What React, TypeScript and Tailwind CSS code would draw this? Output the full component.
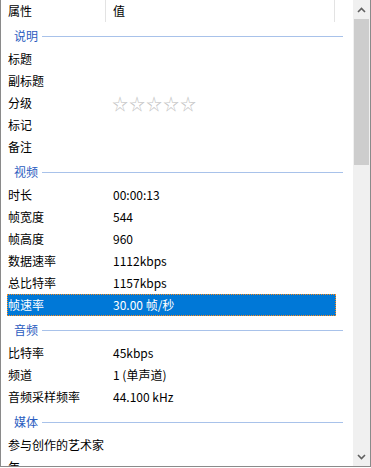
import React from "react";

type Item = { group: string } | { label: string; value?: string; stars?: boolean; selected?: boolean };

const ITEMS: Item[] = [
  { group: "说明" },
  { label: "标题" },
  { label: "副标题" },
  { label: "分级", stars: true },
  { label: "标记" },
  { label: "备注" },
  { group: "视频" },
  { label: "时长", value: "00:00:13" },
  { label: "帧宽度", value: "544" },
  { label: "帧高度", value: "960" },
  { label: "数据速率", value: "1112kbps" },
  { label: "总比特率", value: "1157kbps" },
  { label: "帧速率", value: "30.00 帧/秒", selected: true },
  { group: "音频" },
  { label: "比特率", value: "45kbps" },
  { label: "频道", value: "1 (单声道)" },
  { label: "音频采样频率", value: "44.100 kHz" },
  { group: "媒体" },
  { label: "参与创作的艺术家" },
  { label: "年" },
];

const FONT = { fontFamily: '"Segoe UI", "Noto Sans CJK SC", "Noto Sans", sans-serif' };

function Row({ item }: { item: Item }) {
  if ("group" in item) {
    return (
      <div className="flex h-[26px] items-center pt-[2px] pl-[13px] pr-[10px]">
        <span className="text-[12px] text-[#2a5cc0]">{item.group}</span>
        <div className="ml-[4px] h-px flex-1 bg-[#a8c2ea]" />
      </div>
    );
  }
  return (
    <div
      className={
        item.selected
          ? "ml-[6px] flex h-[22px] w-[329px] items-center border border-dotted border-[#ff8c1a] bg-[#0078d7] text-white"
          : "ml-[6px] flex h-[22px] w-[329px] items-center border border-transparent text-black"
      }
    >
      <span className="w-[105px] shrink-0 text-[12px]">{item.label}</span>
      {item.stars ? (
        <span className="-ml-[1px] flex gap-[1px] text-[16px] leading-none text-[#c4c4c4]">
          <span>☆</span>
          <span>☆</span>
          <span>☆</span>
          <span>☆</span>
          <span>☆</span>
        </span>
      ) : (
        <span className="text-[12px]">{item.value}</span>
      )}
    </div>
  );
}

export default function App() {
  return (
    <div className="h-[468px] w-[371px] bg-white" style={FONT}>
      <div className="flex h-[467px] w-[371px] overflow-hidden border-x border-b border-[#8a8a8a]">
        <div className="flex-1 overflow-hidden">
          <div className="flex h-[22px] items-center text-[12px] text-black">
            <span className="w-[104px] pl-[7px]">属性</span>
            <div className="h-[22px] w-px bg-[#e3e3e3]" />
            <span className="w-[228px] pl-[7px]">值</span>
            <div className="h-[22px] w-px bg-[#e3e3e3]" />
          </div>
          {ITEMS.map((item, i) => (
            <Row key={i} item={item} />
          ))}
        </div>
        <div className="flex w-[17px] shrink-0 flex-col bg-[#f0f0f0]">
          <div className="flex h-[19px] items-center justify-center">
            <svg width="9" height="6" viewBox="0 0 9 6">
              <path d="M1 5 L4.5 1.5 L8 5" stroke="#606060" strokeWidth="1.6" fill="none" />
            </svg>
          </div>
          <div className="mx-px h-[146px] bg-[#cdcdcd]" />
          <div className="flex-1" />
          <div className="flex h-[19px] items-center justify-center">
            <svg width="9" height="6" viewBox="0 0 9 6">
              <path d="M1 1 L4.5 4.5 L8 1" stroke="#606060" strokeWidth="1.6" fill="none" />
            </svg>
          </div>
        </div>
      </div>
    </div>
  );
}
